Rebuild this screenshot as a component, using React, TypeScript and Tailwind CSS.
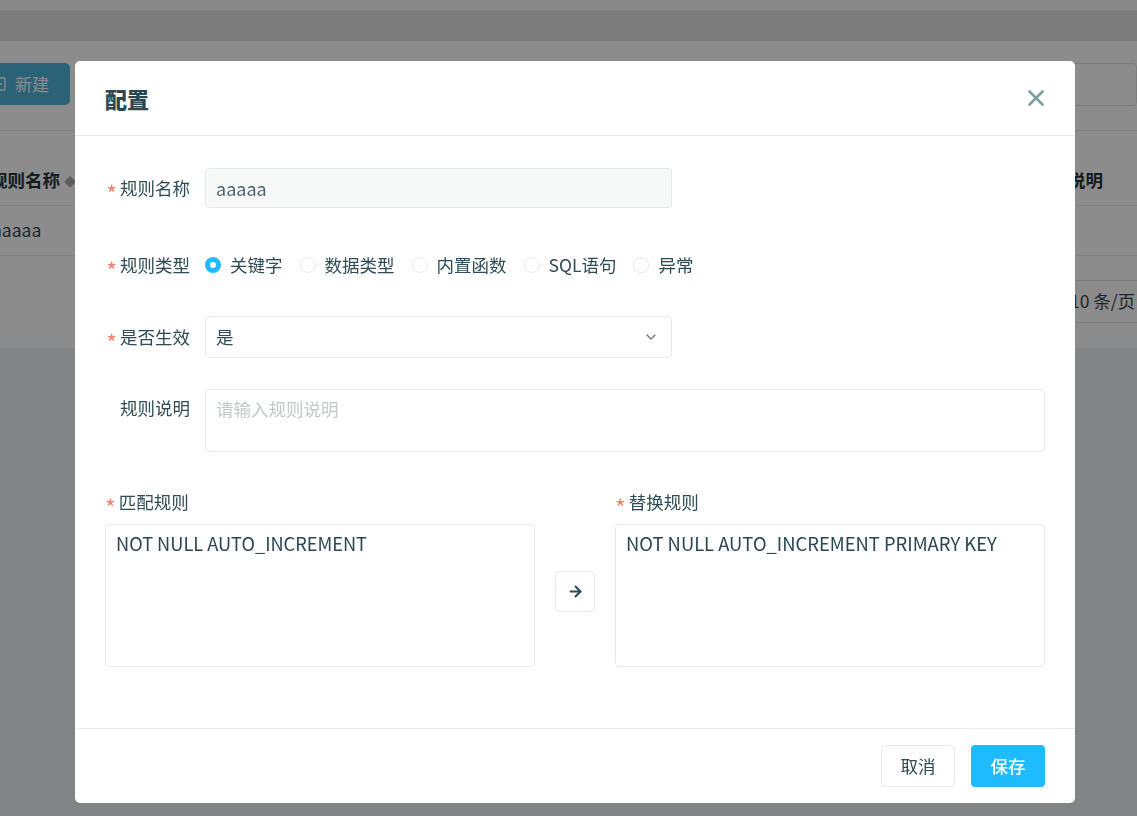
import { X, ArrowRight, ChevronDown, SquarePlus } from 'lucide-react'

const font = { fontFamily: '"Noto Sans CJK SC", "Noto Sans", sans-serif' }

function Star() {
    return <span className="text-[#f3826c] text-[23px] leading-[24px] translate-y-[5px]">*</span>
}

function Label({ text, required = true }: { text: string; required?: boolean }) {
    return (
        <div className="w-[85px] h-[24px] shrink-0 flex items-center justify-end gap-[3px] text-[17.5px] leading-[24px] text-[#2e4b56]">
            {required && <Star />}
            <span>{text}</span>
        </div>
    )
}

function Radio({ label, checked }: { label: string; checked?: boolean }) {
    return (
        <label className="flex items-center gap-[9px] mr-[17px]">
            <span className={checked
                ? 'w-[16px] h-[16px] rounded-full border-[5px] border-[#1ebcfe] bg-white'
                : 'w-[16px] h-[16px] rounded-full border border-[#e6eaec] bg-white'} />
            <span className="text-[17.5px] leading-[24px] text-[#2e4b56]">{label}</span>
        </label>
    )
}

function Page() {
    return (
        <div className="w-[1137px] h-[816px] bg-[#eceef1] overflow-hidden" style={font}>
            <div className="h-[10px] bg-[#f7f7f7]" />
            <div className="h-[31px] bg-[#e3e3e3] border-b border-[#dcdcdc]" />
            <div className="h-[307px] bg-white flex flex-col">
                <div className="flex items-start justify-between mt-[22px]">
                    <button className="ml-[-30px] h-[42px] w-[100px] rounded-[5px] bg-[#4fb2da] text-white text-[17px] flex items-center justify-center gap-[8px]">
                        <SquarePlus size={16} />
                        新建
                    </button>
                    <div className="w-[120px] h-[43px] border border-[#e3e3e3] rounded-[4px]" />
                </div>
                <div className="mt-[24px] border-t border-[#ececec]" />
                <div className="mt-[24px] h-[51px] border-b border-[#ececec] flex items-center justify-between text-[17.5px] font-bold text-[#22343c]">
                    <span className="ml-[-10px]">规则名称 <span className="text-[#aaa] text-[12px]">◆</span></span>
                    <span className="mr-[34px]">说明</span>
                </div>
                <div className="h-[50px] border-b border-[#ececec] flex items-center text-[17.5px] text-[#33474f]">
                    <span className="ml-[-8px]">aaaaa</span>
                </div>
                <div className="flex justify-end mt-[24px]">
                    <div className="w-[70px] h-[43px] border-y border-l border-[#e3e3e3] flex items-center pl-[2px] text-[17.5px] text-[#33474f] whitespace-nowrap">10 条/页</div>
                </div>
            </div>
        </div>
    )
}

export default function App() {
    return (
        <div className="relative w-[1137px] h-[816px] overflow-hidden" style={font}>
            <Page />
            <div className="fixed inset-0 bg-black/[0.45] pt-[61px] pl-[75px]">
                <div className="w-[1000px] h-[742px] bg-white rounded-[5px] flex flex-col">
                    <div className="h-[75px] border-b border-[#e8ebec] flex items-center justify-between pl-[30px] pr-[26px]">
                        <h2 className="text-[22px] font-black text-[#2a4853] leading-none">配置</h2>
                        <X size={26} strokeWidth={2.4} className="text-[#7d9da3]" />
                    </div>

                    <div className="flex-1 flex flex-col px-[30px] pt-[32px]">
                        <div className="flex items-center gap-[15px]">
                            <Label text="规则名称" />
                            <div className="w-[467px] h-[40px] rounded-[4px] border border-[#e6eaec] bg-[#f7f9f9] flex items-center px-[10px] text-[18px] text-[#4b6570]">
                                aaaaa
                            </div>
                        </div>

                        <div className="flex items-center gap-[15px] mt-[37px] h-[40px]">
                            <Label text="规则类型" />
                            <div className="flex items-center">
                                <Radio label="关键字" checked />
                                <Radio label="数据类型" />
                                <Radio label="内置函数" />
                                <Radio label="SQL语句" />
                                <Radio label="异常" />
                            </div>
                        </div>

                        <div className="flex items-center gap-[15px] mt-[31px]">
                            <Label text="是否生效" />
                            <div className="w-[467px] h-[42px] rounded-[4px] border border-[#e6eaec] bg-white flex items-center justify-between pl-[10px] pr-[12px] text-[17.5px] text-[#2e4b56]">
                                是
                                <ChevronDown size={16} className="text-[#6f7b80]" />
                            </div>
                        </div>

                        <div className="flex items-start gap-[15px] mt-[31px]">
                            <div className="pt-[7px]"><Label text="规则说明" required={false} /></div>
                            <div className="flex-1 h-[63px] rounded-[4px] border border-[#e6eaec] px-[10px] pt-[7px] text-[17.5px] leading-[24px] text-[#c3c8cc]">
                                请输入规则说明
                            </div>
                        </div>

                        <div className="flex items-center mt-[38px]">
                            <div className="flex flex-col w-[430px]">
                                <div className="flex items-center h-[24px] gap-[3px] text-[17.5px] leading-[24px] text-[#2e4b56]">
                                    <Star />匹配规则
                                </div>
                                <div className="mt-[10px] h-[143px] rounded-[4px] border border-[#e6eaec] px-[10px] pt-[6px] text-[18.2px] leading-[24px] text-[#2a4651]">
                                    NOT NULL AUTO_INCREMENT
                                </div>
                            </div>
                            <div className="flex-1 flex justify-center pt-[26px]">
                                <button className="w-[40px] h-[41px] rounded-[4px] border border-[#e6eaec] bg-white flex items-center justify-center">
                                    <ArrowRight size={17} strokeWidth={2.8} className="text-[#2a4853]" />
                                </button>
                            </div>
                            <div className="flex flex-col w-[430px]">
                                <div className="flex items-center h-[24px] gap-[3px] text-[17.5px] leading-[24px] text-[#2e4b56]">
                                    <Star />替换规则
                                </div>
                                <div className="mt-[10px] h-[143px] rounded-[4px] border border-[#e6eaec] px-[10px] pt-[6px] text-[18.4px] leading-[24px] text-[#2a4651]">
                                    NOT NULL AUTO_INCREMENT PRIMARY KEY
                                </div>
                            </div>
                        </div>
                    </div>

                    <div className="h-[75px] border-t border-[#e8ebec] flex items-center justify-end gap-[16px] px-[30px]">
                        <button className="w-[74px] h-[42px] rounded-[4px] border border-[#e6eaec] bg-white text-[17.5px] text-[#2e4b56]">取消</button>
                        <button className="w-[74px] h-[42px] rounded-[4px] bg-[#1ebcfe] text-[17.5px] font-medium text-white">保存</button>
                    </div>
                </div>
            </div>
        </div>
    )
}
